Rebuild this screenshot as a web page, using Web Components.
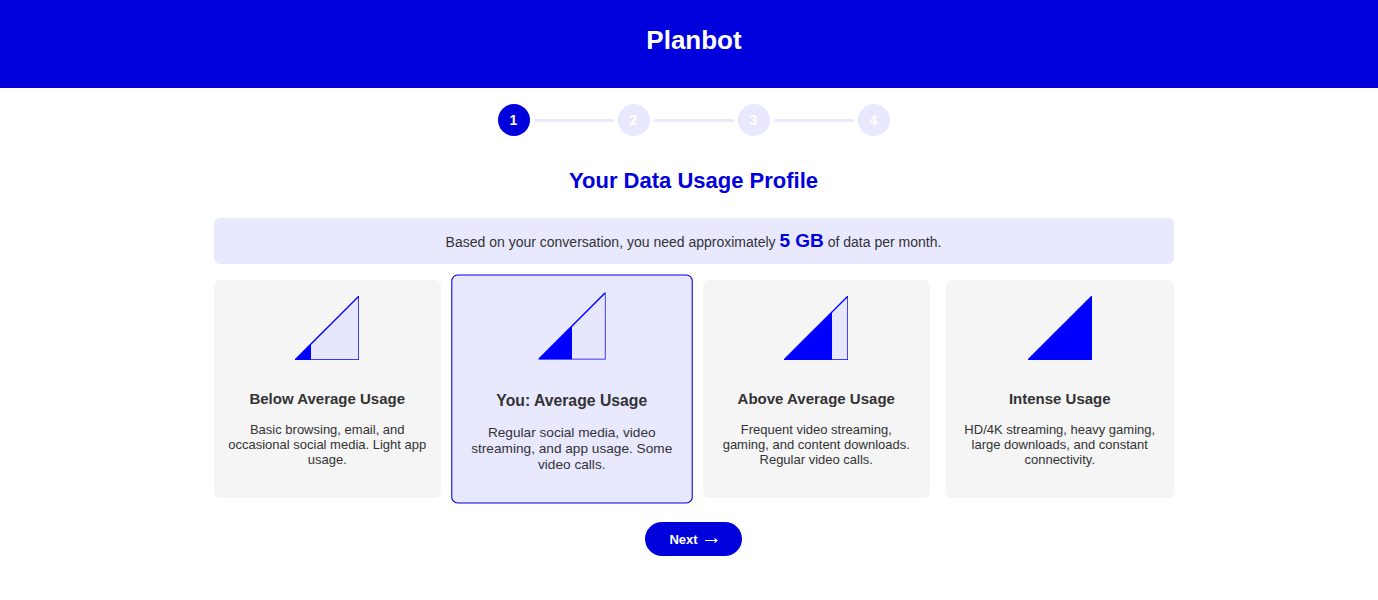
<!DOCTYPE html>
<html lang="en">
<head>
<meta charset="utf-8">
<title>Planbot</title>
<style>
  body { margin: 0; background: #fff; color: #333; font-family: "Liberation Sans", Arial, sans-serif; overflow-x: hidden; }
</style>
</head>
<body>
<plan-app></plan-app>
<script>
  class Base extends HTMLElement {
    constructor() {
      super();
      this.attachShadow({ mode: "open" }).innerHTML = this.view();
    }
  }

  customElements.define("app-header", class extends Base {
    view() {
      return `<style>
        :host { display: block; background: #0000dc; color: #fff; text-align: center; padding: 25px 0 33px 10px; }
        h1 { margin: 0; font-size: 26px; line-height: 30px; }
      </style><header><h1><slot></slot></h1></header>`;
    }
  });

  customElements.define("step-tracker", class extends Base {
    view() {
      const total = Number(this.getAttribute("total"));
      const current = Number(this.getAttribute("current"));
      const items = Array.from({ length: total }, (_, i) =>
        `<li${i + 1 === current ? ' class="on" aria-current="step"' : ""}><span>${i + 1}</span></li>`).join("");
      return `<style>
        :host { display: block; }
        ol { display: flex; justify-content: center; margin: 0; padding: 0; list-style: none; }
        li { display: flex; align-items: center; }
        li + li::before { content: ""; width: 80px; height: 3px; margin: 0 4px; background: #e8e8ff; }
        span { width: 32px; height: 32px; border-radius: 50%; background: #e8e8ff; color: #fff;
          font-size: 14px; font-weight: bold; line-height: 32px; text-align: center; }
        .on span { background: #0000dc; }
      </style><ol>${items}</ol>`;
    }
  });

  customElements.define("usage-summary", class extends Base {
    view() {
      return `<style>
        :host { display: block; padding: 13px 16px 11px; border-radius: 6px; background: #e8e8ff; text-align: center; font-size: 14px; line-height: 22px; }
        p { margin: 0; }
        ::slotted(strong) { color: #0000dc; font-size: 19px; line-height: 19px; }
      </style><p><slot></slot></p>`;
    }
  });

  customElements.define("usage-icon", class extends Base {
    view() {
      const level = Number(this.getAttribute("level"));
      return `<style>
        :host { display: block; width: 64px; height: 64px; }
        svg { display: block; }
      </style><svg width="64" height="64" viewBox="0 0 64 64" aria-hidden="true">
        <path d="M0 64L64 0V64Z" fill="#e6e6ff" stroke="#00f" stroke-width="1.4"/>
        <path d="M0 64L${level} ${64 - level}V64Z" fill="#00f"/>
      </svg>`;
    }
  });

  customElements.define("usage-card", class extends Base {
    view() {
      return `<style>
        :host { display: block; flex: 1 1 0; padding: 16px 14px; border-radius: 6px; background: #f5f5f5; text-align: center; }
        :host([selected]) { border: 1px solid #0000dc; background: #e8e8ff; transform: scale(1.05); }
        usage-icon { margin: 0 auto; }
        h3 { margin: 30px 0 15px; font-size: 15px; line-height: 17px; }
        p { margin: 0 0 13px; font-size: 13px; line-height: 15px; }
      </style>
      <usage-icon level="${this.getAttribute("level")}"></usage-icon>
      <h3>${this.getAttribute("heading")}</h3>
      <p><slot></slot></p>`;
    }
  });

  customElements.define("next-button", class extends Base {
    view() {
      return `<style>
        :host { display: block; text-align: center; }
        button { display: inline-flex; align-items: center; gap: 6px; height: 34px; padding: 0 24px; border: 0; border-radius: 17px;
          background: #0000dc; color: #fff; font: bold 13px/15px "Liberation Sans", Arial, sans-serif; }
        svg { display: block; margin-top: 2px; }
      </style><button type="button"><slot></slot><svg width="14" height="8" viewBox="0 0 14 8" aria-hidden="true"><path d="M1 4H13V5H1Z" fill="#fff"/><path d="M10.5 2.5L13 4.5L10.5 6.5" fill="none" stroke="#fff" stroke-width="1.1"/></svg></button>`;
    }
  });

  customElements.define("plan-app", class extends Base {
    view() {
      return `<style>
        :host { display: block; }
        main { max-width: 960px; margin: 0 auto; padding: 16px 0 44px 9px; }
        h2 { margin: 32px 0 25px; color: #0000dc; font-size: 22px; line-height: 25px; text-align: center; }
        .cards { display: flex; gap: 16px; margin: 16px 0 24px; }
      </style>
      <app-header>Planbot</app-header>
      <main>
        <step-tracker total="4" current="1"></step-tracker>
        <h2>Your Data Usage Profile</h2>
        <usage-summary>Based on your conversation, you need approximately <strong>5 GB</strong> of data per month.</usage-summary>
        <div class="cards">
          <usage-card level="16" heading="Below Average Usage">Basic browsing, email, and occasional social media. Light app usage.</usage-card>
          <usage-card selected level="32" heading="You: Average Usage">Regular social media, video streaming, and app usage. Some video calls.</usage-card>
          <usage-card level="48" heading="Above Average Usage">Frequent video streaming, gaming, and content downloads. Regular video calls.</usage-card>
          <usage-card level="64" heading="Intense Usage">HD/4K streaming, heavy gaming, large downloads, and constant connectivity.</usage-card>
        </div>
        <next-button>Next</next-button>
      </main>`;
    }
  });
</script>
</body>
</html>
